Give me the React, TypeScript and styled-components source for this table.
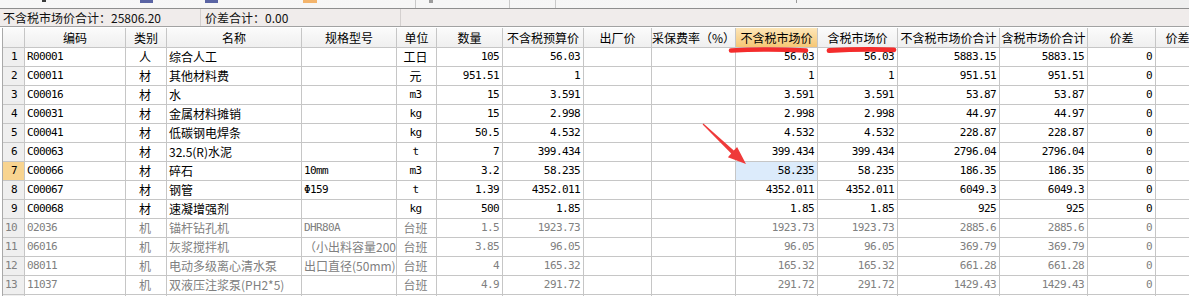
import React from 'react';
import styled, { createGlobalStyle } from 'styled-components';

const GlobalStyle = createGlobalStyle`
  html, body { margin: 0; padding: 0; background: #ffffff; }
  body { overflow: hidden; }
  #root { width: 1189px; height: 296px; overflow: hidden; }
`;

const CJK = `"Noto Sans CJK SC", "Microsoft YaHei", sans-serif`;
const MONO = `"DejaVu Sans Mono", "Liberation Mono", "Noto Sans CJK SC", monospace`;
const GRID = '#c6c6c6';

const Page = styled.div`
  position: relative;
  width: 1189px;
  height: 296px;
  overflow: hidden;
  background: #ffffff;
`;

const ToolStrip = styled.div`
  display: flex;
  align-items: flex-start;
  height: 8px;
  border-bottom: 1px solid #8e8e8e;
  background: linear-gradient(to right, #f7f7f7 0, #f5f5f5 860px, #efefef 860px);
`;

const ToolBit = styled.span<{ $ml: number; $w: number; $h: number; $c: string }>`
  flex: none;
  margin-left: ${(p) => p.$ml}px;
  width: ${(p) => p.$w}px;
  height: ${(p) => p.$h}px;
  background: ${(p) => p.$c};
`;

const SummaryBar = styled.div`
  display: grid;
  grid-template-columns: 201px 200px 1fr;
  height: 17px;
  background: #f0eceb;
  border-bottom: 1px solid #a2a2a2;
  margin-bottom: 1px;
`;

const SummaryCell = styled.div<{ $pl: number }>`
  padding-left: ${(p) => p.$pl}px;
  border-right: 1px solid #d4d0cf;
  font: 12px/17px ${CJK};
  color: #111;
  white-space: nowrap;
  overflow: hidden;
  &:last-child { border-right: none; }
`;

const Table = styled.div`
  margin-left: 2px;
  border-left: 1px solid #a9a9a9;
  width: 1197px;
`;

const Row = styled.div<{ $head?: boolean }>`
  display: grid;
  grid-template-columns: 22px 101px 41px 135px 95px 40px 66px 81px 68px 84px 82px 80px 102px 88px 68px 44px;
  height: ${(p) => (p.$head ? 20 : 19)}px;
`;

const HeadCell = styled.div<{ $active?: boolean }>`
  box-sizing: border-box;
  border-right: 1px solid ${GRID};
  border-bottom: 1px solid ${GRID};
  background: ${(p) =>
    p.$active
      ? 'linear-gradient(#fde6b8, #f6c775)'
      : 'linear-gradient(#fbfbfb, #efefef)'};
  font: 12px/19px ${CJK};
  color: #000;
  text-align: center;
  white-space: nowrap;
  overflow: hidden;
`;

const RowNum = styled.div<{ $active?: boolean; $muted?: boolean }>`
  box-sizing: border-box;
  border-right: 1px solid ${GRID};
  border-bottom: 1px solid ${GRID};
  background: ${(p) => (p.$active ? '#f8d490' : '#efefef')};
  font: 11px/18px ${MONO};
  letter-spacing: -0.6px;
  color: ${(p) => (p.$muted ? '#808080' : '#000')};
  text-align: right;
  padding-right: 7px;
  white-space: nowrap;
  overflow: hidden;
`;

type Align = 'left' | 'center' | 'right';

const Cell = styled.div<{ $align: Align; $mono: boolean; $muted: boolean; $selected?: boolean }>`
  box-sizing: border-box;
  border-right: 1px solid ${GRID};
  border-bottom: 1px solid ${GRID};
  background: ${(p) => (p.$selected ? '#dcebfb' : '#ffffff')};
  font: ${(p) => (p.$mono ? `11px/18px ${MONO}` : `12px/18px ${CJK}`)};
  letter-spacing: ${(p) => (p.$mono ? '-0.6px' : '0')};
  color: ${(p) => (p.$muted ? '#808080' : '#000')};
  text-align: ${(p) => p.$align};
  padding: 0 ${(p) => (p.$align === 'right' ? 3 : 2)}px 0 ${(p) => (p.$align === 'left' ? 2 : 0)}px;
  white-space: nowrap;
  overflow: hidden;
`;

const Overlay = styled.svg`
  position: absolute;
  left: 0;
  top: 0;
  pointer-events: none;
`;

const headers = [
  '',
  '编码',
  '类别',
  '名称',
  '规格型号',
  '单位',
  '数量',
  '不含税预算价',
  '出厂价',
  '采保费率（%）',
  '不含税市场价',
  '含税市场价',
  '不含税市场价合计',
  '含税市场价合计',
  '价差',
  '价差',
];

const aligns: Align[] = [
  'left', 'center', 'left', 'left', 'center',
  'right', 'right', 'right', 'right', 'right', 'right', 'right', 'right', 'right', 'left',
];

type RowData = string[];

const rows: RowData[] = [
  ['R00001', '人', '综合人工', '', '工日', '105', '56.03', '', '', '56.03', '56.03', '5883.15', '5883.15', '0', ''],
  ['C00011', '材', '其他材料费', '', '元', '951.51', '1', '', '', '1', '1', '951.51', '951.51', '0', ''],
  ['C00016', '材', '水', '', 'm3', '15', '3.591', '', '', '3.591', '3.591', '53.87', '53.87', '0', ''],
  ['C00031', '材', '金属材料摊销', '', 'kg', '15', '2.998', '', '', '2.998', '2.998', '44.97', '44.97', '0', ''],
  ['C00041', '材', '低碳钢电焊条', '', 'kg', '50.5', '4.532', '', '', '4.532', '4.532', '228.87', '228.87', '0', ''],
  ['C00063', '材', '32.5(R)水泥', '', 't', '7', '399.434', '', '', '399.434', '399.434', '2796.04', '2796.04', '0', ''],
  ['C00066', '材', '碎石', '10mm', 'm3', '3.2', '58.235', '', '', '58.235', '58.235', '186.35', '186.35', '0', ''],
  ['C00067', '材', '钢管', 'Φ159', 't', '1.39', '4352.011', '', '', '4352.011', '4352.011', '6049.3', '6049.3', '0', ''],
  ['C00068', '材', '速凝增强剂', '', 'kg', '500', '1.85', '', '', '1.85', '1.85', '925', '925', '0', ''],
  ['02036', '机', '锚杆钻孔机', 'DHR80A', '台班', '1.5', '1923.73', '', '', '1923.73', '1923.73', '2885.6', '2885.6', '0', ''],
  ['06016', '机', '灰浆搅拌机', '（小出料容量200', '台班', '3.85', '96.05', '', '', '96.05', '96.05', '369.79', '369.79', '0', ''],
  ['08011', '机', '电动多级离心清水泵', '出口直径(50mm)', '台班', '4', '165.32', '', '', '165.32', '165.32', '661.28', '661.28', '0', ''],
  ['11037', '机', '双液压注浆泵(PH2*5)', '', '台班', '4.9', '291.72', '', '', '291.72', '291.72', '1429.43', '1429.43', '0', ''],
  ['', '', '', '', '', '', '', '', '', '', '', '', '', '', ''],
];

const hasCJK = (s: string) => /[\u3000-\u9fff\uff00-\uffef]/.test(s);

const ACTIVE_ROW = 6;
const ACTIVE_COL = 9;

export default function App() {
  return (
    <Page>
      <GlobalStyle />
      <ToolStrip>
        <ToolBit $ml={42} $w={4} $h={2} $c="#3a3a3a" />
        <ToolBit $ml={94} $w={13} $h={3} $c="#5a64a4" />
        <ToolBit $ml={52} $w={13} $h={3} $c="#5a64a4" />
        <ToolBit $ml={85} $w={14} $h={3} $c="#f3b46c" />
        <ToolBit $ml={98} $w={1} $h={8} $c="#c9c9c9" />
        <ToolBit $ml={13} $w={4} $h={3} $c="#9c9c9c" />
        <ToolBit $ml={76} $w={1} $h={8} $c="#c9c9c9" />
        <ToolBit $ml={45} $w={1} $h={8} $c="#c9c9c9" />
        <ToolBit $ml={240} $w={1} $h={3} $c="#9a9a9a" />
      </ToolStrip>
      <SummaryBar>
        <SummaryCell $pl={3}>不含税市场价合计：25806.20</SummaryCell>
        <SummaryCell $pl={4}>价差合计：0.00</SummaryCell>
        <SummaryCell $pl={0} />
      </SummaryBar>
      <Table>
        <Row $head>
          {headers.map((h, i) => (
            <HeadCell key={i} $active={i === ACTIVE_COL + 1}>
              {h}
            </HeadCell>
          ))}
        </Row>
        {rows.map((r, ri) => {
          const muted = ri >= 9;
          return (
            <Row key={ri}>
              <RowNum $active={ri === ACTIVE_ROW} $muted={muted}>
                {ri < 13 ? ri + 1 : ''}
              </RowNum>
              {r.map((v, ci) => (
                <Cell
                  key={ci}
                  $align={aligns[ci]}
                  $mono={!hasCJK(v)}
                  $muted={muted}
                  $selected={ri === ACTIVE_ROW && ci === ACTIVE_COL}
                >
                  {v}
                </Cell>
              ))}
            </Row>
          );
        })}
      </Table>
      <Overlay width="1189" height="296" viewBox="0 0 1189 296">
        <path
          d="M731 50.5 Q 768 48.5 806 50.5"
          stroke="#f42c2c"
          strokeWidth="4.6"
          strokeLinecap="round"
          fill="none"
        />
        <path
          d="M829 50.5 Q 861 48.8 894 49.8"
          stroke="#f42c2c"
          strokeWidth="4.8"
          strokeLinecap="round"
          fill="none"
        />
        <polygon
          points="703.4,123.5 733.8,150.6 737.1,146.9 746,164 727.9,157.3 731.2,153.6 702.6,124.4"
          fill="#ef3a3a"
        />
      </Overlay>
    </Page>
  );
}
